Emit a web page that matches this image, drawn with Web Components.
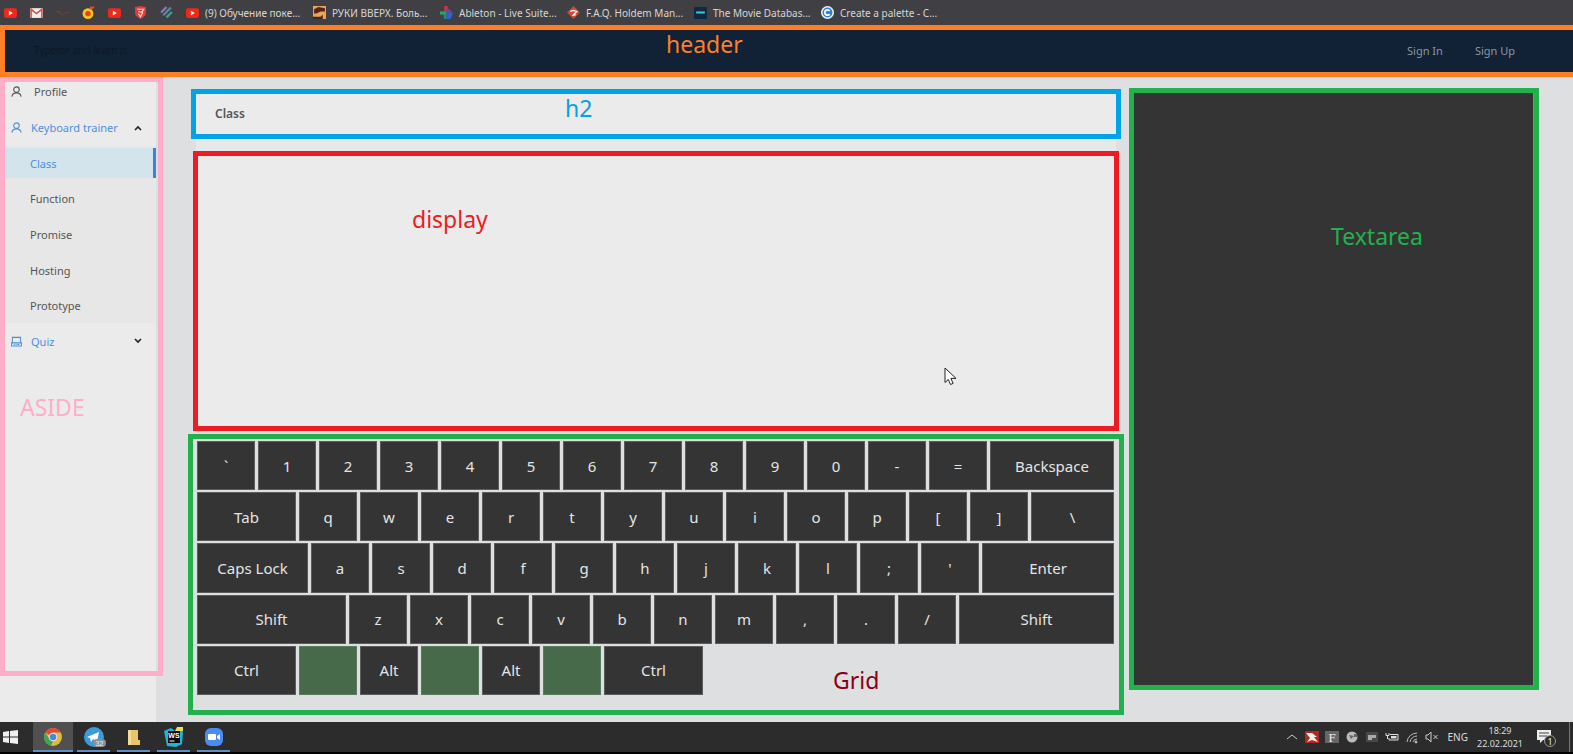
<!DOCTYPE html>
<html lang="en">
<head>
<meta charset="utf-8">
<title>Keyboard trainer</title>
<style>
  html, body { margin: 0; }
  body { font-family: "Noto Sans", "Open Sans", sans-serif; color: #333; background: #dedfe1; }
</style>
</head>
<body>
<app-shell></app-shell>
<script>
const define = (name, html) => customElements.define(name, class extends HTMLElement {
  constructor() {
    super();
    this.attachShadow({ mode: 'open' }).innerHTML = html;
  }
});

/* Outlined region with a floating caption; caption place is set with --lx / --ly */
define('region-box', `
<style>
  :host { display: flex; flex-direction: column; position: relative; box-sizing: border-box; border: 5px solid var(--c); min-width: 0; }
  .cap { position: absolute; left: var(--lx); top: var(--ly); font-size: 23px; line-height: 32px; color: var(--lc, var(--c)); white-space: nowrap; pointer-events: none; }
</style>
<slot></slot><span class="cap"><slot name="caption"></slot></span>`);

const yt = '<svg viewBox="0 0 12 12"><rect y="2" width="12" height="9" rx="2" fill="#f0281a"/><path d="M4.500 4.300v4.400l3.600-2.200z" fill="#fff"/></svg>';
const marks = [
  [yt, '', 'YouTube'],
  ['<svg viewBox="0 0 12 12"><rect y="2" width="12" height="9" fill="#eee"/><path d="M1 11V3l5 4 5-4v8" fill="none" stroke="#c9574f" stroke-width="1.500"/></svg>', '', 'Mail'],
  ['<svg viewBox="0 0 12 12"><path d="M0 5c2-1 3 0 6 3 3-2 4-3 6-2-3 0-4 1-6 2.500C4 7 3 5.500 0 5z" fill="#8a4a2c"/></svg>', '', 'Bookmark'],
  ['<svg viewBox="0 0 12 12"><circle cx="5.500" cy="7" r="5" fill="#f7c51c"/><circle cx="5.500" cy="7" r="2.500" fill="#e8401c"/><path d="M7 3l1-3 1 1 3-1-2 3z" fill="#e0502c"/></svg>', '', 'Bookmark'],
  [yt, '', 'YouTube'],
  ['<svg viewBox="0 0 12 12"><path d="M1 1l5-1 5 1v6c0 2-3 4-5 5-2-1-5-3-5-5z" fill="#e23b3b"/><path d="M3 3l6 0-2 3M4 5l4 1-2 4-2-3" fill="none" stroke="#ffd9d0"/></svg>', '', 'Bookmark'],
  ['<svg viewBox="0 0 12 12"><path d="M1 6l5-5" stroke="#8b7ab0" stroke-width="2"/><path d="M3 8.500l7-7" stroke="#5f86a8" stroke-width="2"/><path d="M6 10.500l5-5" stroke="#3f9f96" stroke-width="2"/></svg>', '', 'Bookmark'],
  [yt, '(9) Обучение поке...'],
  ['<svg viewBox="0 0 12 12"><rect width="12" height="12" fill="#e8a35c"/><path d="M1 3l4-2 6 1v3H7L3 7H1z" fill="#5a2414"/><path d="M0 10h7l2-2v4H0z" fill="#3d2a22"/></svg>', 'РУКИ ВВЕРХ. Боль...'],
  ['<svg viewBox="0 0 12 12"><path d="M4 0h3v5H4z" fill="#d0324f"/><path d="M7 2l4 3-3 2-3-2z" fill="#7a3fa0"/><path d="M0 5h6v3H0z" fill="#27a566"/><path d="M6 6h6l-2 6H6z" fill="#2f62d0"/><path d="M3 8h3v4H4z" fill="#1f8f77"/></svg>', 'Ableton - Live Suite...'],
  ['<svg viewBox="0 0 12 12"><path d="M6 0l6 6-6 6-6-6z" fill="#d8442e"/><path d="M3 5l3-1 3 1-4 4 3-1" fill="none" stroke="#fff" stroke-width="1.200"/></svg>', 'F.A.Q. Holdem Man...'],
  ['<svg viewBox="0 0 12 12"><rect y="1" width="12" height="11" rx="1" fill="#0e2a42"/><path d="M2 6h8" stroke="#45c0c8" stroke-width="2"/></svg>', 'The Movie Databas...'],
  ['<svg viewBox="0 0 12 12"><circle cx="6" cy="6" r="6" fill="#eef6fb"/><circle cx="6" cy="6" r="4.600" fill="#2b7fd8"/><path d="M8 4.500a2.500 2.500 0 1 0 0 3" fill="none" stroke="#fff" stroke-width="1.600"/></svg>', 'Create a palette - C...']
];
define('bookmark-bar', `
<style>
  :host { display: flex; height: 25px; align-items: center; background: #404044; padding-left: 4px; overflow: hidden; }
  a { display: flex; align-items: center; color: #d6d6d6; text-decoration: none; font-size: 10px; line-height: 16px; gap: 6px; margin-right: 13px; white-space: nowrap; }
  a.t { width: 114px; flex: none; }
  svg { width: 13px; height: 13px; flex: none; }
</style>` + marks.map(([i, t, n]) => t ? `<a href="#" class="t">${i}<span>${t}</span></a>` : `<a href="#" aria-label="${n}">${i}</a>`).join(''));

define('site-header', `
<style>
  :host { display: block; }
  region-box { --c: #ff7f27; --lx: 661px; --ly: -2px; border-right: 0; background: #112136; }
  .row { display: flex; align-items: center; height: 40px; padding: 0 58px 2px 29px; font-size: 11px; }
  .brand { color: #0d1929; margin-right: auto; font-size: 10px; }
  a { color: #8d97a3; text-decoration: none; margin-left: 32px; }
</style>
<region-box><div class="row"><span class="brand">Typetor and learn js</span><a href="#">Sign In</a><a href="#">Sign Up</a></div><span slot="caption">header</span></region-box>`);

const user = '<svg viewBox="0 0 12 12" fill="none" stroke="currentColor" stroke-width="1.200"><circle cx="6" cy="4" r="3"/><path d="M1 11.500c.5-3 2.500-4 5-4s4.500 1 5 4"/></svg>';
const laptop = '<svg viewBox="0 0 12 12" fill="none" stroke="currentColor" stroke-width="1.100"><path d="M1.500 7.500v-6h9v6M.6 7.500h10.800v3.500H.6zM3 9.300h1M5 9.300h1M7 9.300h2"/></svg>';
define('side-nav', `
<style>
  :host { display: flex; flex-direction: column; flex: 0 0 163px; background: linear-gradient(to right, #ebebeb 156px, #dedfe1 156px); }
  region-box { --c: #ffaec9; --lx: 15px; --ly: 309px; flex: 1; margin-bottom: 46px; }
  a { display: flex; align-items: center; align-self: center; box-sizing: border-box; height: 30px; padding-left: 6px; color: #555; font-size: 11px; text-decoration: none; flex: 1; }
  .first { height: 18px; margin-bottom: 10px; gap: 12px; }
  ul { list-style: none; margin: 0; padding: 0; display: grid; grid-auto-rows: 1fr; height: 249px; }
  ul ul, .group { display: contents; }
  .head { color: #4b90dc; gap: 9px; }
  .head .chev { margin-left: auto; margin-right: 16px; color: #222; width: 8px; height: 8px; }
  li { display: flex; align-items: center; }
  li li { background: #e7e7e8; margin-right: 2px; }
  li li a { padding-left: 25px; }
  .on { color: #4b90dc; background: #d3e4ec; border-right: 3px solid #3585d8; }
  svg { width: 11px; height: 11px; flex: none; }
</style>
<region-box>
  <nav>
    <a class="first" href="#">${user}Profile</a>
    <ul>
      <li class="group"><a class="head" href="#">${user}Keyboard trainer<svg class="chev" viewBox="0 0 8 8"><path d="M1 6l3-3 3 3" fill="none" stroke="currentColor" stroke-width="1.600"/></svg></a>
        <ul><li><a class="on" href="#">Class</a></li><li><a href="#">Function</a></li><li><a href="#">Promise</a></li><li><a href="#">Hosting</a></li><li><a href="#">Prototype</a></li></ul>
      </li>
      <li><a class="head" href="#">${laptop}Quiz<svg class="chev" viewBox="0 0 8 8"><path d="M1 2l3 3 3-3" fill="none" stroke="currentColor" stroke-width="1.600"/></svg></a></li>
    </ul>
  </nav>
  <span slot="caption">ASIDE</span>
</region-box>`);

/* Each key is [label, relative width]; a null label leaves an empty stretch */
const rows = [
  [...[...'`1234567890-='].map(k => [k, 58]), ['Backspace', 124]],
  [['Tab', 99], ...[...'qwertyuiop[]'].map(k => [k, 58]), ['\\', 83]],
  [['Caps Lock', 111], ...[..."asdfghjkl;'"].map(k => [k, 58]), ['Enter', 132]],
  [['Shift', 149], ...[...'zxcvbnm,./'].map(k => [k, 58]), ['Shift', 155]],
  [['Ctrl', 99], ['', 58], ['Alt', 58], ['', 58], ['Alt', 58], ['', 58], ['Ctrl', 99], [null, 408]]
];
define('key-board', `
<style>
  :host { display: grid; grid-auto-rows: 1fr; row-gap: 2px; height: 254px; padding: 2px 5px 15px 4px; }
  .row { display: flex; column-gap: 3px; }
  button, i { flex: var(--w) 1 0; min-width: 0; box-sizing: border-box; }
  button { padding: 0; border: 0; box-shadow: inset 0 0 0 1px #5c5c5c; background: #343434; color: #e4e4e4; font: 15px/20px "Noto Sans", "Open Sans", sans-serif; white-space: nowrap; }
  .sp { background: #466a4a; box-shadow: inset 0 0 0 1px #5b7c60; }
</style>` + rows.map(r => `<div class="row">${r.map(([k, w]) => k === null ? `<i style="--w:${w}"></i>` : `<button type="button" style="--w:${w}" ${k ? '' : 'class="sp" aria-label="Space"'}>${k}</button>`).join('')}</div>`).join(''));

define('trainer-view', `
<style>
  :host { display: flex; flex-direction: column; flex: 936 1 0; min-width: 0; padding: 12px 0 7px; }
  .h { --c: #00a2e8; --lx: 369px; --ly: -2px; margin: 0 3px; background: #ebebeb; }
  h2 { margin: 0; font-size: 12px; line-height: 40px; font-weight: 600; color: #555; padding-left: 19px; }
  .strip { height: 12px; margin: 0 8px; background: #e7e8e9; }
  .d { --c: #ed1c24; --lx: 214px; --ly: 47px; flex: 1; min-height: 120px; margin: 0 5px 3px; background: #ebebeb; }
  .d svg { position: absolute; left: 746px; top: 211px; width: 13px; height: 19px; }
  .k { --c: #22b14c; --lc: #880015; --lx: 640px; --ly: 225px; }
</style>
<region-box class="h"><h2>Class</h2><span slot="caption">h2</span></region-box>
<div class="strip"></div>
<region-box class="d"><svg viewBox="0 0 13 19"><path d="M1 1v14.500l3.300-3 2.200 5 2.600-1.100-2.200-5H12z" fill="#fff" stroke="#222"/></svg><span slot="caption">display</span></region-box>
<region-box class="k"><key-board></key-board><span slot="caption">Grid</span></region-box>`);

define('code-editor', `
<style>
  :host { display: flex; flex-direction: column; flex: 410 1 0; min-width: 0; padding: 11px 0 32px; }
  region-box { --c: #22b14c; --lx: 197px; --ly: 127px; flex: 1; background: #343434; }
  textarea { flex: 1; box-sizing: border-box; border: 0; border-right: 1px solid #888; background: transparent; color: #eee; resize: none; outline: 0; padding: 8px; }
</style>
<region-box><textarea id="t"></textarea><label for="t" slot="caption">Textarea</label></region-box>`);

define('task-bar', `
<style>
  :host { display: flex; height: 30px; background: #2c2c2c; border-bottom: 2px solid #000; color: #ddd; font-size: 10px; align-items: stretch; }
  button { border: 0; padding: 0; background: none; display: flex; align-items: center; justify-content: center; box-sizing: border-box; }
  .start { width: 33px; padding-right: 12px; }
  .app { width: 33px; margin-right: 7px; border-bottom: 2px solid #5a8fc8; padding-top: 2px; }
  .app.on { width: 40px; margin-right: 4px; background: #505050; }
  .app svg { width: 20px; height: 20px; }
  .tray { margin-left: auto; display: flex; align-items: center; }
  .tray > .i { width: 14px; height: 14px; margin-right: 6px; }
  .lang { margin-right: 10px; margin-left: 3px; }
  .clock { display: flex; flex-direction: column; align-items: center; font-size: 9px; line-height: 13px; width: 44px; }
  .note { width: 22px; height: 22px; margin-left: 14px; }
  .end { border-left: 1px solid #777; width: 3px; margin-left: 11px; align-self: stretch; }
</style>
<button class="start" aria-label="Start"><svg width="15" height="14" viewBox="0 0 15 14" fill="#f0f0f0"><path d="M0 2l6-1v5.500H0zM7 .9L15 0v6.500H7zM0 7.500h6V13l-6-1zM7 7.500h8V14l-8-1z"/></svg></button>
<button class="app on" aria-label="Chrome"><svg viewBox="0 0 20 20"><circle cx="10" cy="10" r="9" fill="#e2b93b"/><path d="M10 10L2.200 5.500A9 9 0 0 1 17.800 5.500H10z" fill="#dd4b3e"/><path d="M2.200 5.500L6.500 12l3.500 2-2 4.800A9 9 0 0 1 2.200 5.500z" fill="#3fa35a"/><circle cx="10" cy="10" r="4.300" fill="#eee"/><circle cx="10" cy="10" r="3.300" fill="#4a84e0"/></svg></button>
<button class="app" aria-label="Telegram"><svg viewBox="0 0 20 20" overflow="visible"><circle cx="10" cy="10" r="10" fill="#3a9bd8"/><path d="M3 10l12-5-2 10-4-3-2 3-1-4z" fill="#fff"/><rect x="9" y="12" width="13" height="8" rx="4" fill="#8a8f94"/><text x="15.500" y="18.500" font-size="7" text-anchor="middle" fill="#eee">32</text></svg></button>
<button class="app" aria-label="Explorer"><svg viewBox="0 0 20 20"><path d="M4 3h10v10h2v5H4z" fill="#e8c56a"/><path d="M4 3h3v15H4z" fill="#f5dc92"/></svg></button>
<button class="app" aria-label="WebStorm"><svg viewBox="0 0 20 20"><path d="M0 4l7-3 4 3 5-4 3 5-1 12-6 3-9-1z" fill="#1fb5d8"/><path d="M11 4l2-4h6v4z" fill="#e5e05a"/><rect x="4" y="4" width="12" height="12" fill="#0a0a0a"/><text x="10" y="11" font-size="7" font-weight="700" text-anchor="middle" fill="#fff">WS</text><path d="M5.500 14h5" stroke="#fff"/></svg></button>
<button class="app" aria-label="Zoom"><svg viewBox="0 0 20 20"><rect x="1" y="1" width="18" height="18" rx="6" fill="#4a8cf0"/><rect x="4" y="7" width="8" height="6" rx="1" fill="#fff"/><path d="M13 9l3-2v6l-3-2z" fill="#fff"/></svg></button>
<div class="tray">
  <svg class="i" viewBox="0 0 14 14"><path d="M2 9l5-4 5 4" fill="none" stroke="#ccc"/></svg>
  <svg class="i" viewBox="0 0 14 14"><rect y="1" width="14" height="12" fill="#b02a20"/><path d="M1 3l6 0 5 4-3 0 4 5-6-2-5 2 3-4z" fill="#eee"/></svg>
  <svg class="i" viewBox="0 0 14 14"><rect y="1" width="14" height="12" fill="#666"/><text x="7" y="12" font-family="Liberation Serif" font-size="13" text-anchor="middle" fill="#eee">F</text></svg>
  <svg class="i" viewBox="0 0 14 14"><circle cx="7" cy="7" r="5.500" fill="#bbb"/><path d="M4 5l5 1-3 3M9 4h3v3H9z" fill="#666"/></svg>
  <svg class="i" viewBox="0 0 14 14"><rect x="1" y="2" width="12" height="10" fill="#484848"/><path d="M3 5h8v3H7v2H3z" fill="#aaa"/></svg>
  <svg class="i" viewBox="0 0 14 14"><path d="M5 4.500h8v5.500H4V8" fill="none" stroke="#ddd"/><path d="M6 6h5.500v2.500H6z" fill="#ddd"/><path d="M1 3v2.500h3V3M2.500 5.500V9" fill="none" stroke="#ddd"/></svg>
  <svg class="i" viewBox="0 0 14 14" fill="none" stroke="#bbb"><path d="M2 12A10 10 0 0 1 12 3M5 12a7 7 0 0 1 7-6M8 12a4 4 0 0 1 4-3"/><circle cx="11" cy="12" r="1" fill="#ddd"/></svg>
  <svg class="i" viewBox="0 0 14 14" fill="none" stroke="#ccc"><path d="M1 5h2l3-3v10L3 9H1zM8.500 5l4 4M12.500 5l-4 4"/></svg>
  <span class="lang">ENG</span>
  <span class="clock"><span>18:29</span><span>22.02.2021</span></span>
  <svg class="note" viewBox="0 0 22 22"><path d="M1 4h14v10H7l-3 3v-3H1z" fill="#eee"/><path d="M3 7h10M3 10h8" stroke="#444"/><circle cx="14" cy="15" r="5.500" fill="#2c2c2c" stroke="#999"/><text x="14" y="18.500" font-size="9" text-anchor="middle" fill="#eee">1</text></svg>
  <span class="end"></span>
</div>`);

define('app-shell', `
<style>
  :host { display: flex; flex-direction: column; min-height: 100vh; }
  site-header { height: 52px; }
  main { display: flex; flex: 1; padding-right: 34px; }
  trainer-view { margin: 0 5px 0 25px; }
</style>
<bookmark-bar></bookmark-bar>
<site-header></site-header>
<main><side-nav></side-nav><trainer-view></trainer-view><code-editor></code-editor></main>
<task-bar></task-bar>`);
</script>
</body>
</html>
